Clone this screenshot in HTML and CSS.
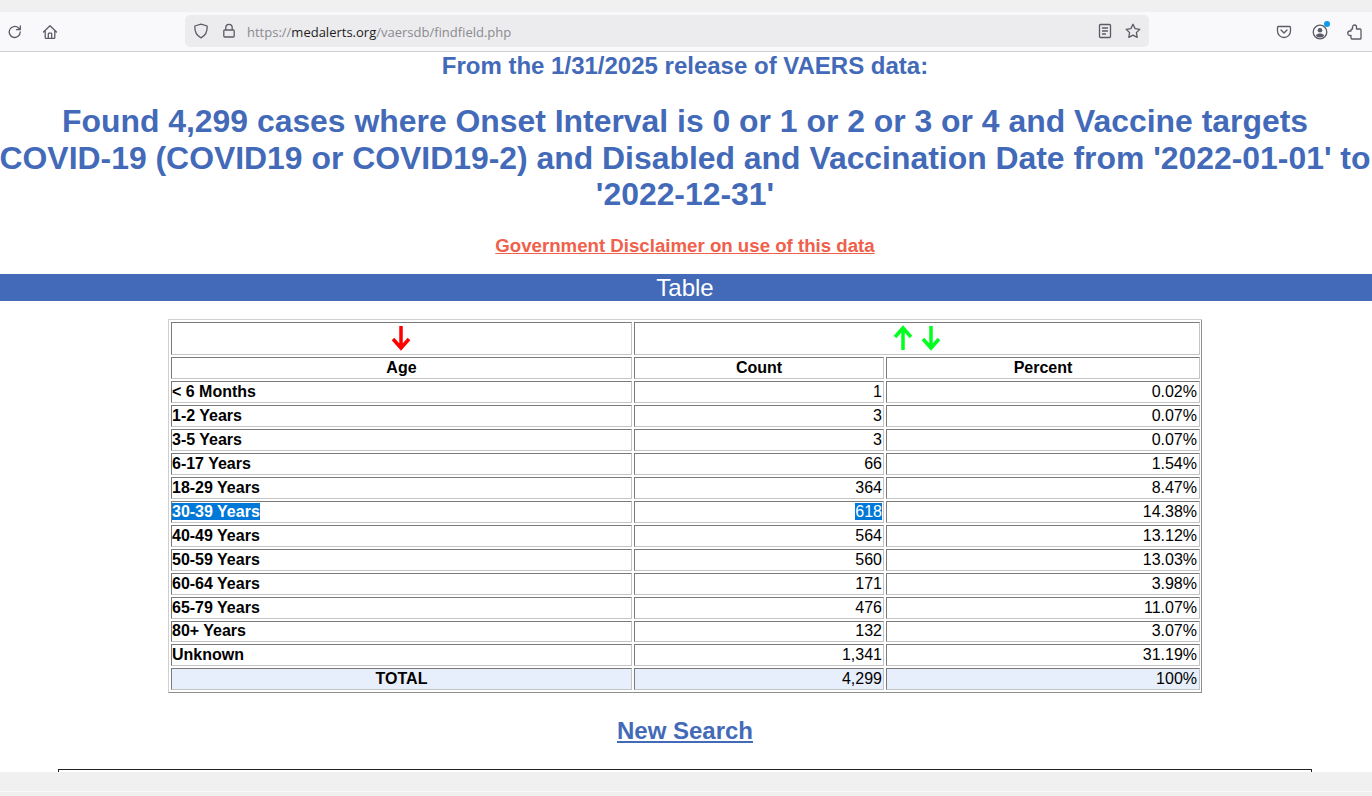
FILE: index.html
```html
<!DOCTYPE html>
<html lang="en">
<head>
<meta charset="utf-8">
<title>MedAlerts VAERS search results</title>
<link rel="stylesheet" href="styles.css">
</head>
<body>
<div class="top-strip"></div>
<header class="toolbar">
  <div class="nav-icons">
    <svg class="icon" viewBox="0 0 16 16"><path d="M13.2 8a5.500 5.500 0 1 1-1.700-4l1.600 1.600M13.300 1.800v3.900H9.500"/></svg>
    <svg class="icon" viewBox="0 0 16 16"><path d="M1.500 8 8 1.800 14.500 8M3.200 7v6.400c0 .5.4.9.9.9h7.800c.5 0 .9-.4.9-.9V7M6.300 14.200V10c0-.5.4-.8.8-.8h1.800c.4 0 .8.3.8.8v4.200"/></svg>
  </div>
  <div class="urlbar">
    <svg class="icon shield" viewBox="0 0 16 16"><path d="M8 1.200 14.200 3c.2 5.500-1.700 9.700-6.200 11.800C3.500 12.700 1.600 8.500 1.800 3z"/></svg>
    <svg class="icon lock" viewBox="0 0 16 16"><path d="M4.800 7V4.500a3.200 3.200 0 0 1 6.400 0V7M3.800 7h8.400c.6 0 1 .4 1 1v5c0 .6-.4 1-1 1H3.800c-.6 0-1-.4-1-1V8c0-.6.4-1 1-1z"/></svg>
    <div class="url"><span class="url-dim">https://</span><span class="url-host">medalerts.org</span><span class="url-dim">/vaersdb/findfield.php</span></div>
    <svg class="icon reader" viewBox="0 0 16 16"><path d="M3.500 1.500h9c.6 0 1 .4 1 1v11c0 .6-.4 1-1 1h-9c-.6 0-1-.4-1-1v-11c0-.6.4-1 1-1zM5.500 5h5M5.500 8h5M5.500 11h3"/></svg>
    <svg class="icon star" viewBox="0 0 16 16"><path d="m8 1.300 2.100 4.300 4.700.7-3.400 3.300.8 4.700L8 12.100l-4.200 2.200.8-4.700L1.200 6.300l4.700-.7z"/></svg>
  </div>
  <div class="tool-icons">
    <svg class="icon" viewBox="0 0 16 16"><path d="M2.500 2.500h11c.6 0 1 .4 1 1V7a6.500 6.500 0 0 1-13 0V3.500c0-.6.4-1 1-1zM5 6l3 3 3-3"/></svg>
    <span class="account">
      <svg class="icon" viewBox="0 0 16 16"><circle cx="8" cy="8" r="6.800"/><circle class="solid" cx="8" cy="6.300" r="2.300"/><path class="solid" d="M3.800 11.500c1-1.400 2.500-2 4.200-2s3.200.6 4.200 2c-1 1.200-2.500 1.900-4.200 1.900s-3.200-.7-4.200-1.900z"/></svg>
      <span class="badge"></span>
    </span>
    <svg class="icon puzzle" viewBox="0 0 16 16"><path d="M9.500 5H13a1 1 0 0 1 1 1v8.500a.5.5 0 0 1-.5.5H5a1 1 0 0 1-1-1v-2.500H3A2.200 2.200 0 0 1 3 7h1V6a1 1 0 0 1 1-1h.5V3a2 2 0 0 1 4 0z"/></svg>
  </div>
</header>
<main class="page">
  <h3 class="release">From the 1/31/2025 release of VAERS data:</h3>
  <h1 class="found">Found 4,299 cases where Onset Interval is 0 or 1 or 2 or 3 or 4 and Vaccine targets <span class="nowrap">COVID-19</span> (COVID19 or COVID19-2) and Disabled and Vaccination Date from <span class="nowrap">'2022-01-01'</span> to <span class="nowrap">'2022-12-31'</span></h1>
  <p class="disclaimer"><a href="#">Government Disclaimer on use of this data</a></p>
  <div class="band">Table</div>
  <table class="data">
    <colgroup><col class="c1"><col class="c2"><col class="c3"></colgroup>
    <tr class="arrows">
      <td class="center">
        <svg class="arrow red" viewBox="0 0 20 26"><path d="M10 1v22M2 14l8 9 8-9"/></svg>
      </td>
      <td class="center" colspan="2">
        <svg class="arrow green" viewBox="0 0 20 26"><path d="M10 25V3M2 12l8-9 8 9"/></svg>
        <svg class="arrow green gap" viewBox="0 0 20 26"><path d="M10 1v22M2 14l8 9 8-9"/></svg>
      </td>
    </tr>
    <tr class="head"><th>Age</th><th>Count</th><th>Percent</th></tr>
    <tr><th class="left">&lt; 6 Months</th><td>1</td><td>0.02%</td></tr>
    <tr><th class="left">1-2 Years</th><td>3</td><td>0.07%</td></tr>
    <tr><th class="left">3-5 Years</th><td>3</td><td>0.07%</td></tr>
    <tr><th class="left">6-17 Years</th><td>66</td><td>1.54%</td></tr>
    <tr><th class="left">18-29 Years</th><td>364</td><td>8.47%</td></tr>
    <tr><th class="left"><span class="sel">30-39 Years</span></th><td><span class="sel">618</span></td><td>14.38%</td></tr>
    <tr><th class="left">40-49 Years</th><td>564</td><td>13.12%</td></tr>
    <tr><th class="left">50-59 Years</th><td>560</td><td>13.03%</td></tr>
    <tr><th class="left">60-64 Years</th><td>171</td><td>3.98%</td></tr>
    <tr><th class="left">65-79 Years</th><td>476</td><td>11.07%</td></tr>
    <tr class="short"><th class="left">80+ Years</th><td>132</td><td>3.07%</td></tr>
    <tr><th class="left">Unknown</th><td>1,341</td><td>31.19%</td></tr>
    <tr class="total"><th>TOTAL</th><td>4,299</td><td>100%</td></tr>
  </table>
  <p class="new-search"><a href="#">New Search</a></p>
  <div class="next-box"></div>
</main>
<footer class="bottom-strip"></footer>
</body>
</html>
```
FILE: styles.css
```css
* { box-sizing: border-box; }
html, body { margin: 0; padding: 0; }
body {
  width: 1372px;
  height: 796px;
  overflow: hidden;
  display: flex;
  flex-direction: column;
  background: #fff;
  font-family: "Liberation Sans", Arial, sans-serif;
  color: #000;
}
.top-strip { height: 12px; background: #f0f0f0; flex: none; }
.toolbar {
  height: 40px;
  flex: none;
  display: flex;
  align-items: center;
  background: #f9f9fb;
  border-bottom: 1px solid #cfcfd2;
  padding: 0 8px 0 7px;
}
.icon {
  width: 16px;
  height: 16px;
  fill: none;
  stroke: #5b5b66;
  stroke-width: 1.300;
  stroke-linejoin: round;
  stroke-linecap: round;
  display: block;
  flex: none;
}
.icon .solid { fill: #5b5b66; stroke: none; }
.nav-icons { display: flex; gap: 19px; width: 178px; }
.urlbar {
  width: 964px;
  height: 32px;
  display: flex;
  align-items: center;
  background: #ececee;
  border-radius: 5px;
  padding: 0 8px;
  margin-bottom: 1px;
}
.lock { margin-left: 12px; }
.url { margin-left: 10px; padding-top: 1px; flex: 1; font-size: 13px; font-family: "Open Sans", "Noto Sans", sans-serif; }
.url-dim { color: #8a8a8f; }
.url-host { color: #1c1c22; }
.star { margin-left: 12px; }
.tool-icons { display: flex; gap: 20px; margin-left: 127px; }
.account { position: relative; display: block; }
.puzzle { margin-left: -1px; }
.badge {
  position: absolute;
  top: -3px;
  right: -2px;
  width: 6px;
  height: 6px;
  border-radius: 50%;
  background: #0a9be8;
}
.page { flex: 1; min-height: 0; overflow: hidden; text-align: center; padding-right: 2px; }
.release {
  margin: 0;
  font-size: 24px;
  line-height: 27px;
  color: #436ab8;
  font-weight: bold;
}
.found {
  margin: 24px -8px 0;
  font-size: 31.900px;
  line-height: 36.500px;
  color: #436ab8;
  font-weight: bold;
}
.nowrap { white-space: nowrap; }
.disclaimer { margin: 22px 0 0; font-size: 18.670px; line-height: 21px; font-weight: bold; }
.disclaimer a { color: #f0604a; }
.band {
  margin: 18px -2px 0 0;
  padding-right: 2px;
  height: 27px;
  line-height: 28px;
  background: #436ab8;
  color: #fff;
  font-size: 24px;
}
.data {
  margin: 18px auto 0;
  width: 1034px;
  table-layout: fixed;
  border-collapse: separate;
  border-spacing: 2px;
  border: 1px solid;
  border-right: 0;
  border-color: #cfcfcf #8f8f8f #8f8f8f #cfcfcf;
  box-shadow: inset -1px 0 0 #8f8f8f;
  background: #fff;
  font-size: 16px;
  line-height: 18px;
}
.c1 { width: 461px; }
.c2 { width: 250px; }
.c3 { width: 314px; }
.data td, .data th {
  height: 22px;
  padding: 0 1px;
  border: 1px solid;
  border-color: #7a7a7a #c4c4c4 #c4c4c4 #7a7a7a;
  text-align: right;
  font-weight: normal;
  overflow: hidden;
}
.data td:last-child { padding-right: 2px; }
.data th { text-align: center; font-weight: bold; }
.data th.left { text-align: left; padding-left: 0; }
.data td.center { text-align: center; }
.data .arrows td { height: 33px; padding: 0; }
.data .short th, .data .short td { height: 21px; }
.total th, .total td { background: #e8effc; }
.arrow { width: 20px; height: 26px; fill: none; stroke-width: 3.500; vertical-align: middle; }
.red { stroke: #ff0000; }
.green { stroke: #00ff1e; }
.gap { margin-left: 4px; }
.sel { background: #0078d7; color: #fff; }
.new-search { margin: 23px 0 0; font-size: 24px; line-height: 29px; font-weight: bold; }
.new-search a { color: #436ab8; }
.next-box {
  margin: 24px 58px 0 58px;
  height: 40px;
  border: 1px solid #222;
}
.bottom-strip {
  height: 24px;
  flex: none;
  background: #f0f0f0;
  position: relative;
  z-index: 1;
  border-bottom: 4px solid #f0f0f0;
  box-shadow: inset 0 -1px 0 #fafafa;
}
```
